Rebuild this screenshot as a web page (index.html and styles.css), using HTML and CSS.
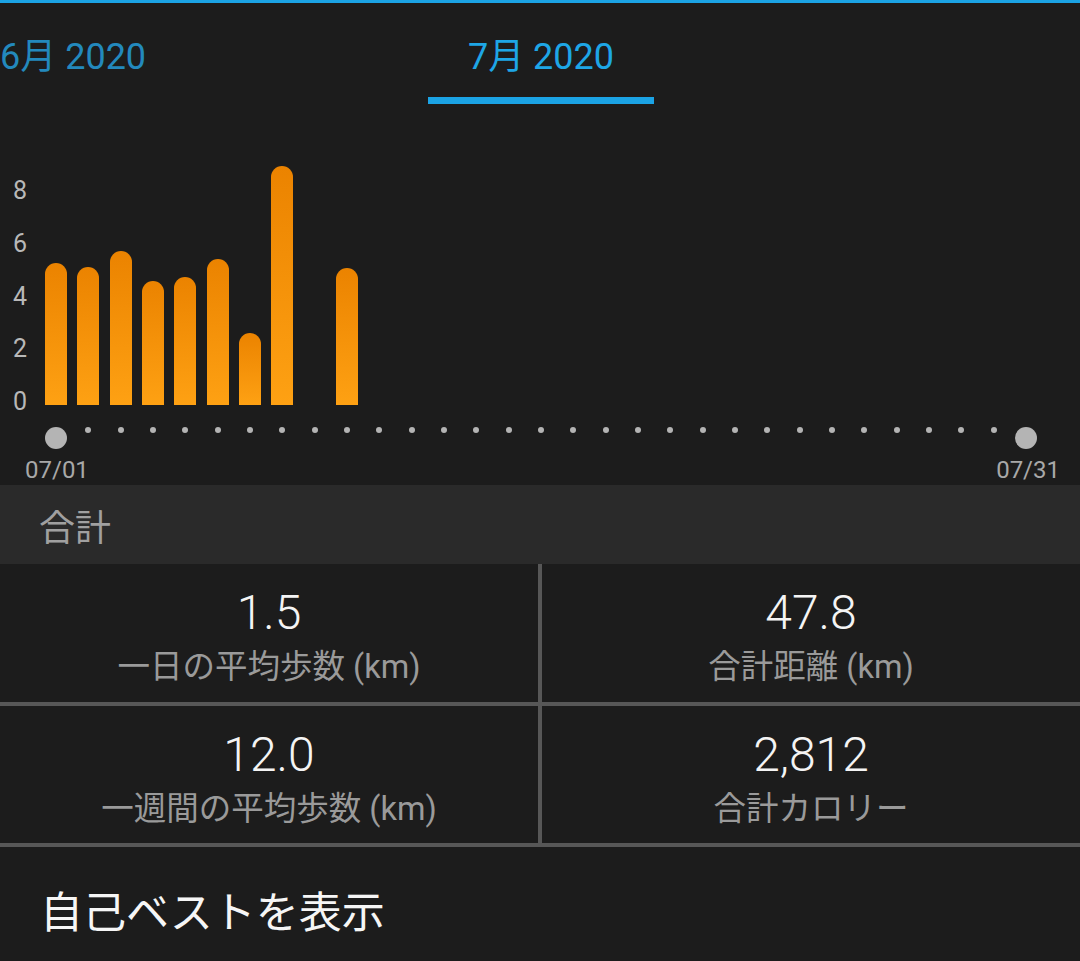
FILE: index.html
```html
<!DOCTYPE html>
<html lang="ja">
<head>
  <meta charset="UTF-8" />
  <meta name="viewport" content="width=device-width, initial-scale=1.0" />
  <title>歩行距離 - 月</title>
  <link rel="stylesheet" href="styles.css">
</head>
<body>
  <div class="topline"></div>

  <nav class="tabs">
    <div class="tab tab-prev">6月 2020</div>
    <div class="tab tab-active">7月 2020</div>
  </nav>

  <div class="chart">
    <div class="chart-body">
      <div class="yaxis">
        <span>8</span>
        <span>6</span>
        <span>4</span>
        <span>2</span>
        <span>0</span>
      </div>
      <div class="plot" id="plot">
        <!-- bars are filled in by the script below -->
      </div>
    </div>
    <div class="dots" id="dots"></div>
    <div class="dates">
      <span>07/01</span>
      <span>07/31</span>
    </div>
  </div>

  <div class="section-title">合計</div>

  <div class="stats">
    <div class="stat">
      <div class="stat-value">1.5</div>
      <div class="stat-label">一日の平均歩数 (km)</div>
    </div>
    <div class="stat">
      <div class="stat-value">47.8</div>
      <div class="stat-label">合計距離 (km)</div>
    </div>
    <div class="stat">
      <div class="stat-value">12.0</div>
      <div class="stat-label">一週間の平均歩数 (km)</div>
    </div>
    <div class="stat">
      <div class="stat-value">2,812</div>
      <div class="stat-label">合計カロリー</div>
    </div>
  </div>

  <div class="best">自己ベストを表示</div>

  <script>
    // bar heights in px for each day of July (0 = no data)
    const days = [142, 138, 154, 124, 128, 146, 72, 239, 0, 137];
    const plot = document.getElementById("plot");
    const dots = document.getElementById("dots");

    for (let i = 0; i < 31; i++) {
      const slot = document.createElement("div");
      slot.className = "day";
      const h = days[i] || 0;
      if (h > 0) {
        const bar = document.createElement("div");
        bar.className = "bar";
        bar.style.height = h + "px";
        slot.appendChild(bar);
      }
      plot.appendChild(slot);

      const d = document.createElement("div");
      d.className = "dot-slot";
      const dot = document.createElement("span");
      dot.className = (i === 0 || i === 30) ? "dot dot-end" : "dot";
      d.appendChild(dot);
      dots.appendChild(d);
    }
  </script>
</body>
</html>
```

FILE: styles.css
```css
body {
  margin: 0;
  padding: 0;
  width: 1080px;
  height: 961px;
  overflow: hidden;
  background-color: #1c1c1c;
  color: #f2f2f2;
  font-family: Roboto, "Noto Sans CJK JP", sans-serif;
}

.topline {
  height: 3px;
  background-color: #1ba3e5;
}

.tabs {
  display: flex;
  height: 101px;
}

.tab {
  box-sizing: border-box;
  height: 101px;
  padding-top: 34px;
  font-size: 36px;
  line-height: 40px;
}

.tab-prev {
  width: 428px;
  padding-left: 0;
  color: #2389bd;
}

.tab-active {
  width: 226px;
  text-align: center;
  color: #1ea6e6;
  border-bottom: 7px solid #1ba3e5;
}

.chart {
  height: 381px;
  box-sizing: border-box;
  padding-top: 56px;
}

.chart-body {
  display: flex;
  align-items: flex-start;
  height: 245px;
}

.yaxis {
  box-sizing: border-box;
  width: 40px;
  height: 235px;
  margin-top: 19px;
  padding-left: 13px;
  display: flex;
  flex-direction: column;
  justify-content: space-between;
  font-size: 25px;
  line-height: 24px;
  color: #b8b8b8;
}

.plot {
  width: 1002px;
  height: 245px;
  display: flex;
  align-items: flex-end;
}

.day {
  flex: 1;
  display: flex;
  justify-content: center;
  align-items: flex-end;
  height: 100%;
}

.bar {
  width: 22px;
  border-radius: 11px 11px 0 0;
  background: linear-gradient(to bottom, #eb8300, #fea113);
}

.dots {
  display: flex;
  width: 1002px;
  height: 22px;
  margin-left: 40px;
  margin-top: 22px;
}

.dot-slot {
  flex: 1;
  display: flex;
  justify-content: center;
  align-items: flex-start;
}

.dot {
  width: 6px;
  height: 6px;
  border-radius: 50%;
  background-color: #b4b4b4;
}

.dot-end {
  width: 22px;
  height: 22px;
}

.dates {
  display: flex;
  justify-content: space-between;
  margin-top: 8px;
  padding: 0 20px 0 25px;
  font-size: 24px;
  line-height: 26px;
  color: #a8a8a8;
}

.section-title {
  box-sizing: border-box;
  height: 79px;
  padding: 8px 0 0 39px;
  background-color: #2a2a2a;
  font-size: 36px;
  line-height: 73px;
  color: #a0a0a0;
}

.stats {
  display: grid;
  grid-template-columns: 538px 538px;
  grid-template-rows: 138px 137px;
  gap: 4px;
  padding-bottom: 4px;
  background-color: #575757;
}

.stat {
  background-color: #1c1c1c;
  display: flex;
  flex-direction: column;
  align-items: center;
  box-sizing: border-box;
  padding-top: 21px;
}

.stat-value {
  font-size: 48px;
  line-height: 56px;
  font-weight: 300;
  color: #f4f4f4;
}

.stat-label {
  margin-top: 6px;
  font-size: 32.5px;
  line-height: 40px;
  color: #9a9a9a;
}

.best {
  padding: 27px 0 0 40px;
  font-size: 43px;
  line-height: 78px;
  color: #f6f6f6;
}
```
